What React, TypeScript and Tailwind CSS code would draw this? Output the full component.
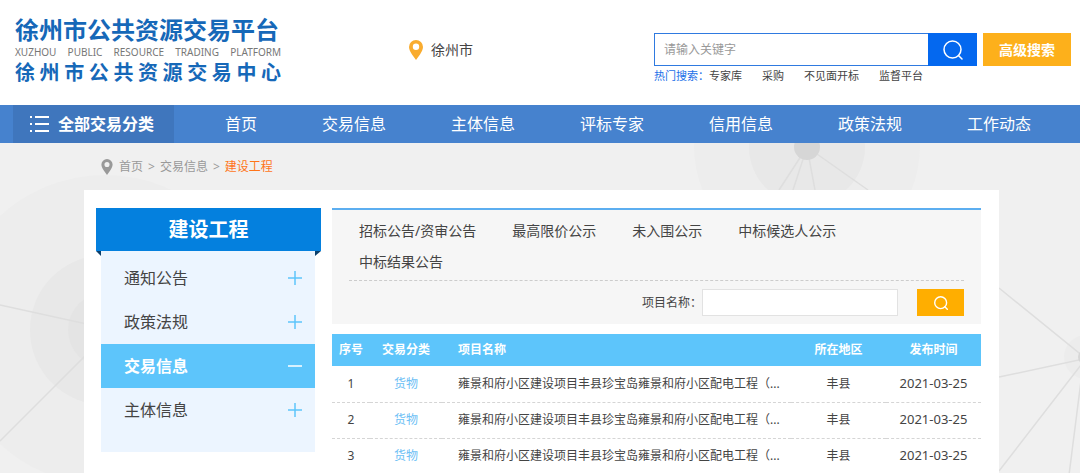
import React from 'react'

interface Notice {
  id: number
  category: string
  name: string
  region: string
  date: string
}

const navItems = ['首页', '交易信息', '主体信息', '评标专家', '信用信息', '政策法规', '工作动态']

const hotWords = ['专家库', '采购', '不见面开标', '监督平台']

const sideItems = [
  { label: '通知公告', active: false },
  { label: '政策法规', active: false },
  { label: '交易信息', active: true },
  { label: '主体信息', active: false },
]

const noticeTypes = ['招标公告/资审公告', '最高限价公示', '未入围公示', '中标候选人公示', '中标结果公告']

const notices: Notice[] = [1, 2, 3].map((id) => ({
  id,
  category: '货物',
  name: '雍景和府小区建设项目丰县珍宝岛雍景和府小区配电工程（...',
  region: '丰县',
  date: '2021-03-25',
}))

const PinIcon = ({ className }: { className: string }) => (
  <svg viewBox="0 0 14 20" className={className} fill="currentColor" aria-hidden="true">
    <path
      fillRule="evenodd"
      d="M7 0a7 7 0 0 0-7 7c0 2.500 1.400 4.800 3 7.500L7 20l4-5.500c1.600-2.700 3-5 3-7.500a7 7 0 0 0-7-7Zm0 3.600a3.200 3.200 0 1 1 0 6.400 3.200 3.200 0 0 1 0-6.400Z"
    />
  </svg>
)

const SearchIcon = ({ className }: { className: string }) => (
  <svg viewBox="0 0 20 20" className={className} fill="none" stroke="currentColor" aria-hidden="true">
    <circle cx="9.500" cy="9.500" r="8.500" />
    <path d="M15.500 15.500 19 19" strokeLinecap="round" />
  </svg>
)

const Backdrop = () => (
  <svg
    viewBox="0 0 1080 340"
    preserveAspectRatio="xMidYMin slice"
    className="absolute inset-0 w-full h-full"
    aria-hidden="true"
  >
    <circle cx="105" cy="187" r="155" fill="#ededed" />
    <circle cx="105" cy="187" r="75" fill="#e8e8e8" />
    <circle cx="105" cy="187" r="37" fill="#e4e4e4" />
    <circle cx="807" cy="4" r="113" fill="#ededed" />
    <circle cx="807" cy="4" r="58" fill="#e8e8e8" />
    <circle cx="1086" cy="214" r="22" fill="#ececec" />
    <g stroke="#dedede" strokeWidth="1.500">
      <path d="M0 162 105 185M0 298 105 193" />
      <path d="M807 4 779 47M807 4 793 47M807 4 815 47M807 4 868 47" />
      <path d="M999 145 1084 214M999 234 1084 216M999 328 1084 218M1068 340 1084 214" />
    </g>
    <circle cx="807" cy="4" r="13" fill="#d6d6d6" />
    <circle cx="1086" cy="214" r="8" fill="#d6d6d6" />
  </svg>
)

const Header = () => (
  <header className="flex items-start h-[105px] pl-[15px] pr-[9px] bg-white">
    {/* Logo */}
    <a href="#" className="block w-[266px] mt-[18px] text-[#1668b8] font-bold whitespace-nowrap">
      <span className="block text-[24px] leading-6">徐州市公共资源交易平台</span>
      <span className="block text-[10px] leading-5 font-normal text-[#777] [text-align-last:justify]">
        XUZHOU PUBLIC RESOURCE TRADING PLATFORM
      </span>
      <span className="block text-[20px] leading-[22px] [text-align-last:justify]">徐州市公共资源交易中心</span>
    </a>

    <div className="flex items-center gap-2 ml-32 mt-10 text-[14px] leading-5 text-[#444]">
      <PinIcon className="w-[14px] h-5 text-[#f9ac2f]" />
      徐州市
    </div>

    {/* Site search */}
    <div className="ml-auto mt-[33px]">
      <form className="flex" onSubmit={(e) => e.preventDefault()}>
        <input
          type="text"
          aria-label="请输入关键字"
          placeholder="请输入关键字"
          className="w-[274px] h-[33px] px-[9px] border border-r-0 border-[#2f7ae0] text-[12px] outline-none placeholder:text-[#999]"
        />
        <button
          type="submit"
          aria-label="搜索"
          className="flex items-center justify-center w-[49px] h-[33px] bg-[#0468ef] text-white"
        >
          <SearchIcon className="w-5 h-5 stroke-[1.5]" />
        </button>
        <button type="button" className="w-[88px] h-[33px] ml-[6px] bg-[#fdb01b] text-white text-[14px] font-bold">
          高级搜索
        </button>
      </form>
      <div className="flex text-[11px] leading-5 text-[#444]">
        <span className="text-[#1c70e8]">热门搜索：</span>
        <div className="flex gap-5">
          {hotWords.map((word) => (
            <a key={word} href="#">
              {word}
            </a>
          ))}
        </div>
      </div>
    </div>
  </header>
)

const Nav = () => (
  <nav className="flex h-[38px] pl-[13px] bg-[#4682ce] text-white text-[16px] whitespace-nowrap">
    <a href="#" className="flex items-center gap-[9px] w-[161px] pl-4 bg-[#3f76bd] font-bold">
      <svg viewBox="0 0 20 16" className="w-5 h-4" fill="currentColor" aria-hidden="true">
        <path d="M1 0h2v2H1zM1 7h2v2H1zM1 14h2v2H1zM6 0h14v2H6zM6 7h14v2H6zM6 14h14v2H6z" />
      </svg>
      全部交易分类
    </a>
    <div className="flex items-center gap-[65px] ml-[51px]">
      {navItems.map((item) => (
        <a key={item} href="#">
          {item}
        </a>
      ))}
    </div>
  </nav>
)

const Sidebar = () => (
  <aside className="flex-shrink-0 w-[225px]">
    <h2 className="h-[43px] bg-[#0480de] text-white text-[20px] leading-[43px] font-bold text-center">建设工程</h2>
    <div className="flex items-start">
      <svg viewBox="0 0 5 5" className="w-[5px] h-[5px]" aria-hidden="true">
        <path d="M0 0h5v5z" fill="#0b3f6b" />
      </svg>
      <ul className="flex-1 pt-[5px] pb-5 bg-[#ecf5ff]">
        {sideItems.map(({ label, active }) => (
          <li key={label}>
            <button
              type="button"
              aria-expanded={active}
              className={`flex items-center justify-between w-full h-11 pl-[23px] pr-[13px] text-[16px] ${
                active ? 'bg-[#5dc5fb] text-white font-bold' : 'text-[#444]'
              }`}
            >
              {label}
              <svg
                viewBox="0 0 14 14"
                className={`w-[14px] h-[14px] ${active ? 'text-white' : 'text-[#5dc5fb]'}`}
                stroke="currentColor"
                strokeWidth="1.500"
                aria-hidden="true"
              >
                <path d={active ? 'M0 7h14' : 'M0 7h14M7 0v14'} />
              </svg>
            </button>
          </li>
        ))}
      </ul>
      <svg viewBox="0 0 6 5" className="w-[6px] h-[5px]" aria-hidden="true">
        <path d="M0 0h6L0 5z" fill="#0b3f6b" />
      </svg>
    </div>
  </aside>
)

const FilterPanel = () => (
  <div className="px-[17px] pt-[5px] pb-2 border-t-2 border-[#5caef0] bg-[#f6f6f6]">
    <div className="flex flex-wrap pl-[10px] pb-[3px] border-b border-dashed border-[#ccc] text-[14px] leading-[31px] text-[#444]">
      {noticeTypes.map((type) => (
        <a key={type} href="#" className="mr-9">
          {type}
        </a>
      ))}
    </div>
    <form className="flex items-center justify-end pt-2" onSubmit={(e) => e.preventDefault()}>
      <label htmlFor="project-name" className="text-[12px] text-[#444]">
        项目名称：
      </label>
      <input
        id="project-name"
        type="text"
        className="w-[196px] h-[27px] px-2 border border-[#e2e2e2] bg-white text-[12px] outline-none"
      />
      <button
        type="submit"
        aria-label="查询"
        className="flex items-center justify-center w-[47px] h-[27px] ml-[19px] bg-[#ffae00] text-white"
      >
        <SearchIcon className="w-[14px] h-[14px] stroke-2" />
      </button>
    </form>
  </div>
)

const NoticeTable = () => (
  <table className="w-full mt-[10px] table-fixed text-[12px] text-center text-[#444]">
    <thead>
      <tr className="h-8 bg-[#5dc5fb] text-white">
        <th className="w-[38px]">序号</th>
        <th className="w-[72px]">交易分类</th>
        <th className="pl-4 text-left">项目名称</th>
        <th className="w-[95px]">所在地区</th>
        <th className="w-[95px]">发布时间</th>
      </tr>
    </thead>
    <tbody>
      {notices.map((notice) => (
        <tr key={notice.id} className="h-9 border-b border-dashed border-[#d5d5d5]">
          <td>{notice.id}</td>
          <td className="text-[#6cc0f5]">{notice.category}</td>
          <td className="pl-4 text-left truncate">
            <a href="#">{notice.name}</a>
          </td>
          <td>{notice.region}</td>
          <td className="text-[13px]">{notice.date}</td>
        </tr>
      ))}
    </tbody>
  </table>
)

const App: React.FC = () => (
  <div className="flex flex-col min-h-screen bg-[#f0f0f0] font-['Noto_Sans','Noto_Sans_CJK_SC',sans-serif]">
    <Header />
    <Nav />
    <main className="relative flex flex-col flex-1 pl-[84px] pr-[81px]">
      <Backdrop />
      <div className="relative flex items-center h-[47px] pl-[17px] text-[12px] text-[#999]">
        <PinIcon className="w-3 h-4 mr-[6px]" />
        <a href="#">首页</a>
        <span className="mx-[5px]">&gt;</span>
        <a href="#">交易信息</a>
        <span className="mx-[5px]">&gt;</span>
        <span className="text-[#ff7519]">建设工程</span>
      </div>
      <div className="relative flex flex-1 items-start gap-[11px] pt-[18px] pl-3 pr-[18px] bg-white">
        <Sidebar />
        <section className="flex-1 min-w-0">
          <FilterPanel />
          <NoticeTable />
        </section>
      </div>
    </main>
  </div>
)

export default App
